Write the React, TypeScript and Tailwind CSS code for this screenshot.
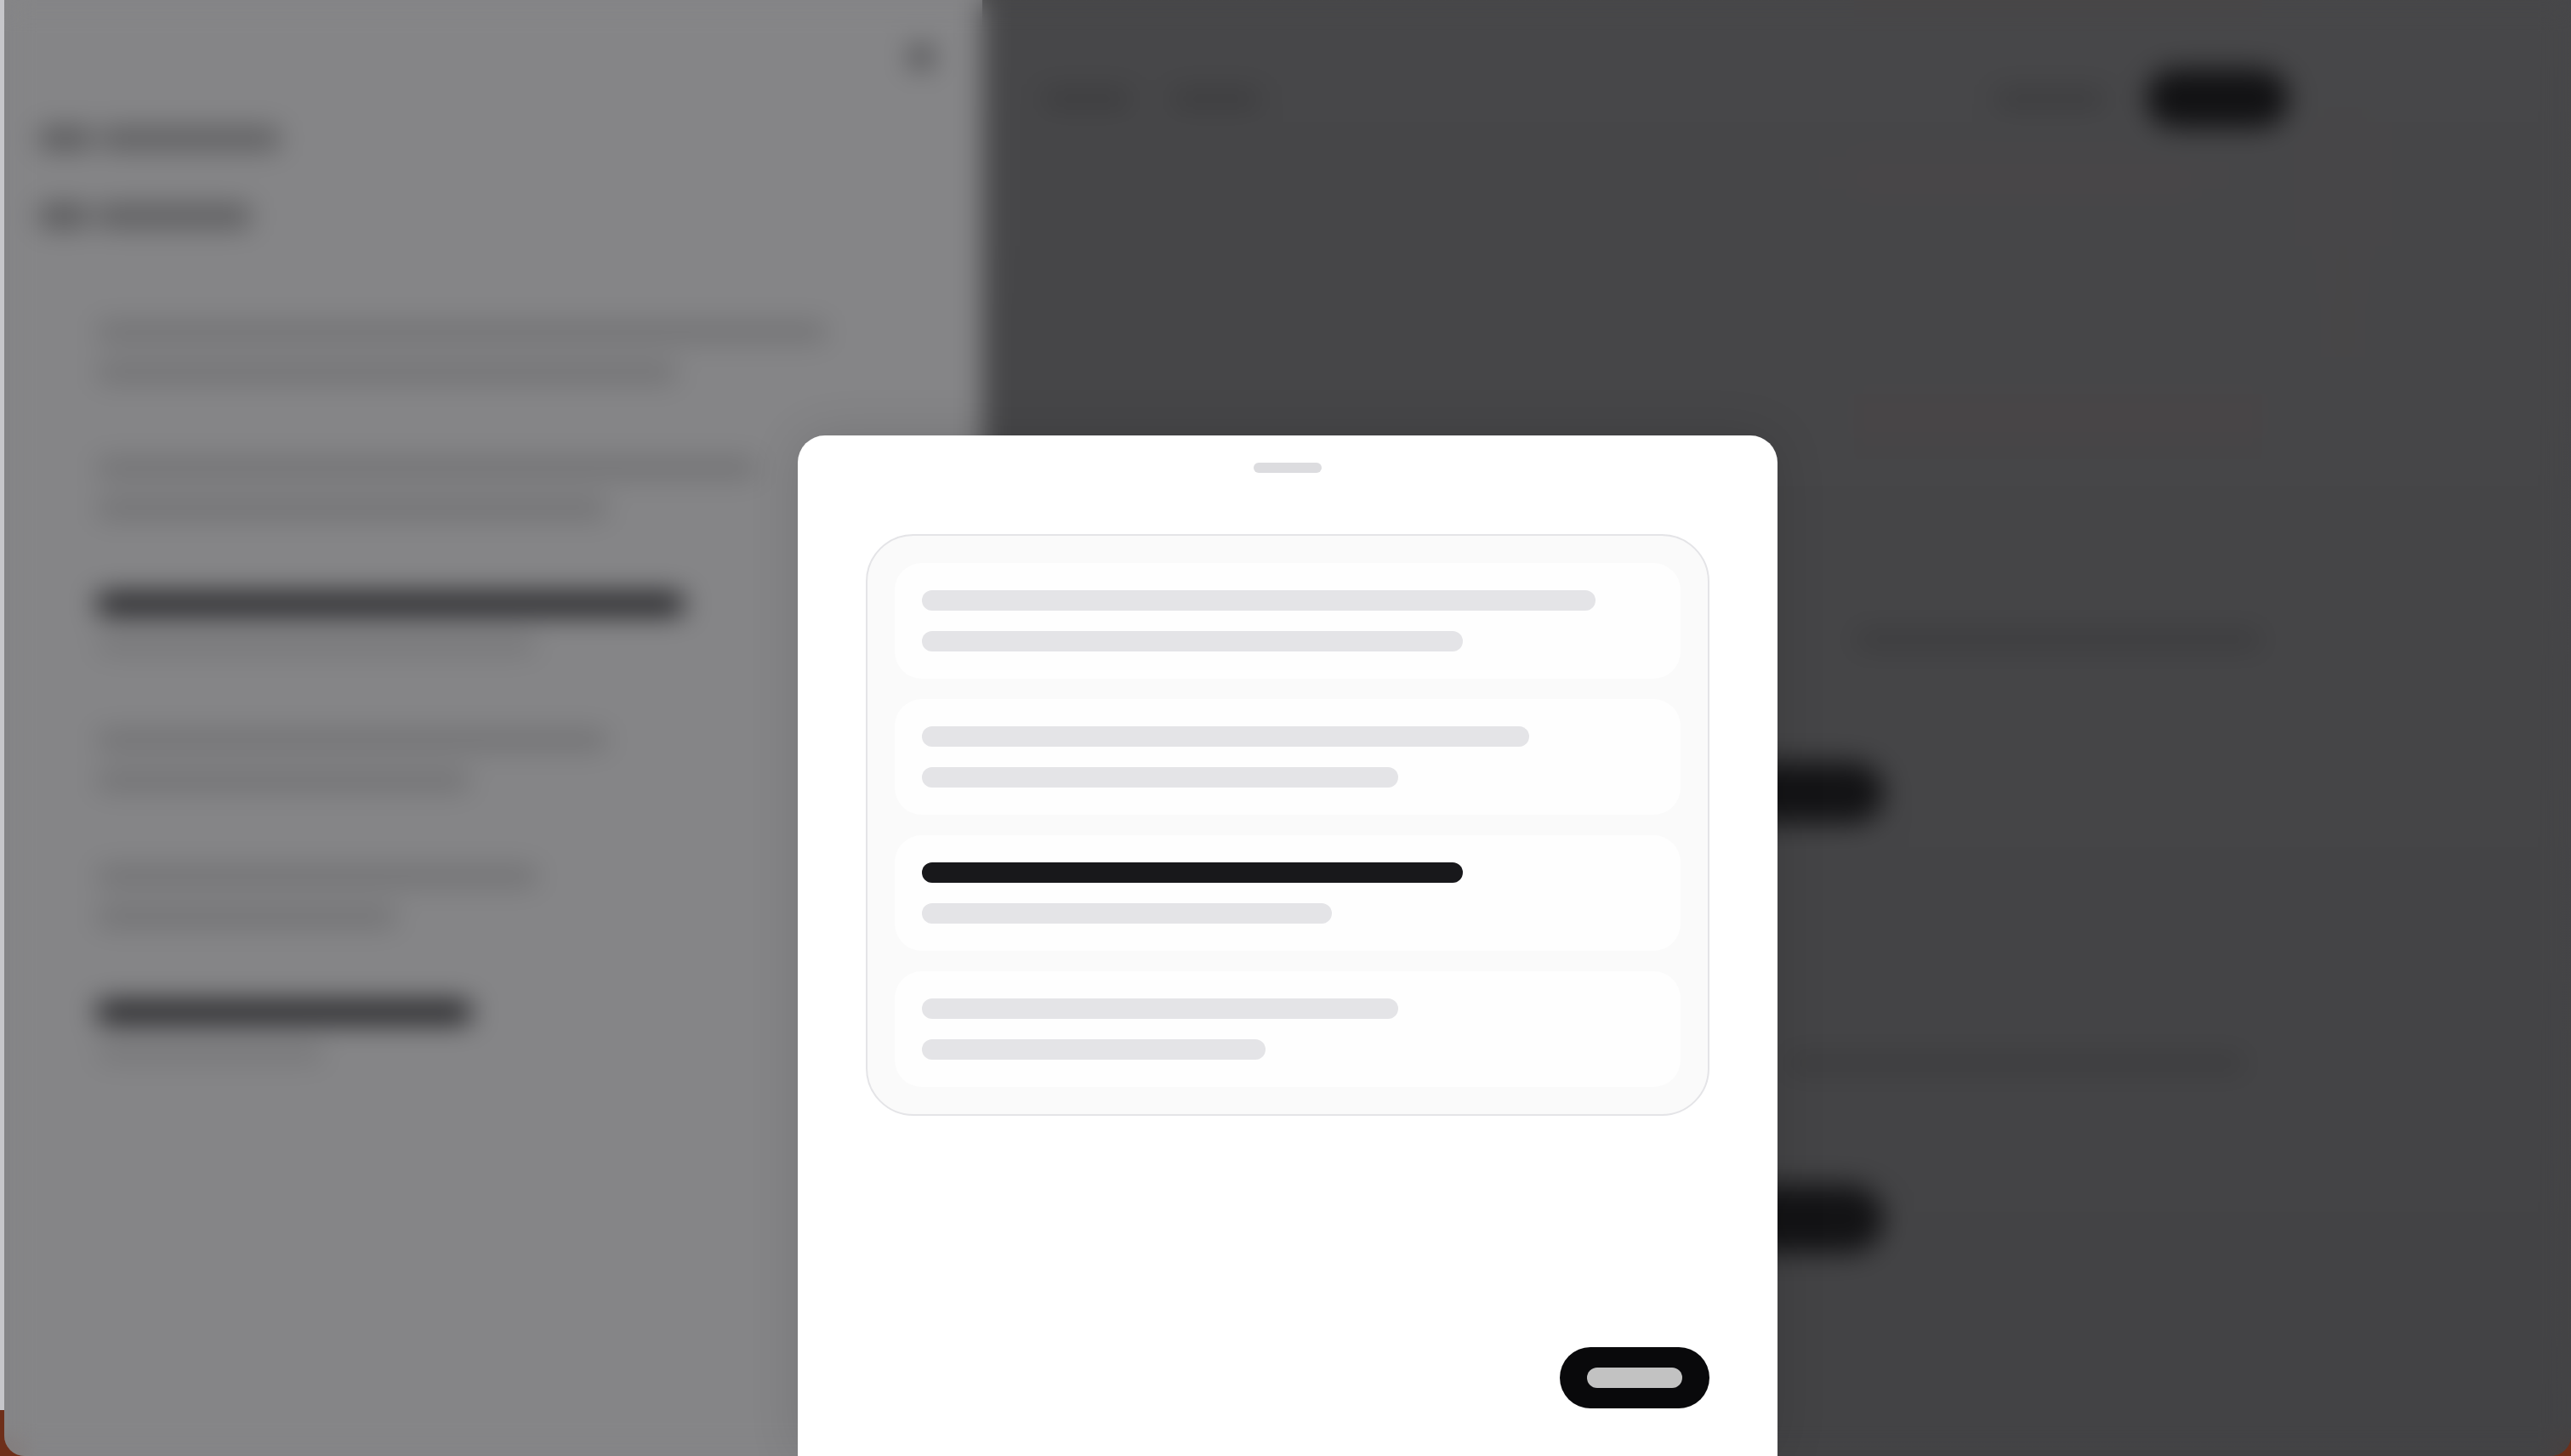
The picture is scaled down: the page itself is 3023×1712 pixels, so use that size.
import React from "react";

function FaintRow({ a, b, dark = false }: { a: number; b: number; dark?: boolean }) {
  return (
    <div className="flex h-[160px] flex-col gap-6 pl-[108px]">
      <div
        className={dark ? "h-6 rounded-xl bg-[#18181b]" : "h-6 rounded-xl bg-[#727274]"}
        style={{ width: a }}
      />
      <div className={dark ? "h-6 rounded-xl bg-[#78787a]" : "h-6 rounded-xl bg-[#727274]"} style={{ width: b }} />
    </div>
  );
}

function SkeletonItem({ a, b, dark = false }: { a: number; b: number; dark?: boolean }) {
  return (
    <div className="flex h-[136px] flex-col gap-6 rounded-[32px] bg-[#fefefe] p-8">
      <div className={dark ? "h-6 rounded-xl bg-[#18181b]" : "h-6 rounded-xl bg-[#e4e4e7]"} style={{ width: a }} />
      <div className="h-6 rounded-xl bg-[#e4e4e7]" style={{ width: b }} />
    </div>
  );
}

export default function App() {
  return (
    <div className="flex h-[1712px] w-[3023px] overflow-hidden bg-[#6e2f1a]">
      <div className="h-[1658px] w-[5px] shrink-0 bg-[#c6c6ca]" />
      <div className="relative flex min-w-0 flex-1 overflow-hidden rounded-b-[24px]">
        {/* page beneath the sheet */}
        <aside className="flex w-[1150px] shrink-0 flex-col bg-[#858587]">
          <div className="flex justify-end pr-[56px] pt-[51px]">
            <svg width="32" height="32" viewBox="0 0 24 24" fill="none" stroke="#18181b" strokeWidth="4" strokeLinecap="round">
              <path d="M4 4 20 20M20 4 4 20" />
            </svg>
          </div>
          <div className="ml-[41px] mt-[67px] flex h-[26px] gap-[10px]">
            <div className="h-full w-[62px] rounded-lg bg-[#59595b]" />
            <div className="h-full w-[211px] rounded-lg bg-[#5e5e60]" />
          </div>
          <div className="ml-[41px] mt-[64px] flex h-[28px] gap-[10px]">
            <div className="h-full w-[58px] rounded-lg bg-[#59595b]" />
            <div className="h-full w-[181px] rounded-lg bg-[#5e5e60]" />
          </div>
          <div className="mt-[110px] flex flex-col">
            <FaintRow a={860} b={684} />
            <FaintRow a={778} b={602} />
            <FaintRow a={692} b={518} dark />
            <FaintRow a={602} b={440} />
            <FaintRow a={520} b={354} />
            <FaintRow a={442} b={268} dark />
          </div>
        </aside>

        <main className="flex min-w-0 flex-1 flex-col bg-gradient-to-b from-[#474749] to-[#434345]">
          <div className="ml-[1025px] h-4 w-[480px] bg-[#484647]" />
          <header className="mt-[65px] flex h-[69px] items-center pl-[71px] pr-[332px]">
            <div className="h-6 w-[104px] rounded-lg bg-[#3d3d3f]" />
            <div className="ml-[48px] h-6 w-[104px] rounded-lg bg-[#3d3d3f]" />
            <div className="ml-auto h-6 w-[130px] rounded-lg bg-[#3d3d3f]" />
            <div className="ml-[48px] h-[69px] w-[167px] rounded-full bg-[#121214]" />
          </header>
          <div className="ml-[1025px] h-[270px] w-[590px] border-r-[30px] border-[#484647] pt-[50px]">
            <div className="h-6 w-[400px] rounded-lg bg-[#4a4647]" />
          </div>
          <div className="ml-[1025px] mt-[43px] h-[57px] w-[480px] rounded-lg bg-[#484547]" />
          <div className="ml-[1025px] mt-[222px] h-5 w-[480px] rounded-full bg-[#3b3b3d]" />
          <div className="ml-[745px] mt-[134px] h-[72px] w-[315px] rounded-full bg-[#131315]" />
          <div className="ml-[945px] mt-[272px] h-5 w-[540px] rounded-full bg-[#3b3b3d]" />
          <div className="ml-[745px] mt-[133px] h-[80px] w-[315px] rounded-full bg-[#131315]" />
        </main>

        {/* dialog overlay */}
        <div className="absolute inset-0 flex items-end justify-center backdrop-blur-[16px]">
          <section className="flex h-[1200px] w-[1152px] flex-col rounded-t-[32px] bg-white px-20 pt-8 shadow-[0_0_60px_rgba(0,0,0,0.12)]">
            <div className="h-3 w-20 self-center rounded-md bg-[#dcdcdf]" />
            <div className="mt-[72px] flex flex-col gap-6 rounded-[56px] border-2 border-[#e4e4e7] bg-[#fafafa] p-8">
              <SkeletonItem a={792} b={636} />
              <SkeletonItem a={714} b={560} />
              <SkeletonItem a={636} b={482} dark />
              <SkeletonItem a={560} b={404} />
            </div>
            <div className="mt-[272px] flex h-[72px] w-44 items-center justify-center self-end rounded-full bg-[#09090b]">
              <div className="h-6 w-28 rounded-xl bg-[#c2c2c2]" />
            </div>
          </section>
        </div>
      </div>
    </div>
  );
}
